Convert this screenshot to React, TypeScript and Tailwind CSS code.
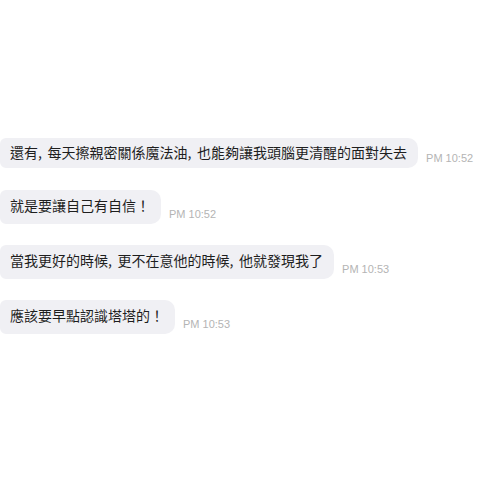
import React from "react";

const msgs = [
  { text: "還有, 每天擦親密關係魔法油, 也能夠讓我頭腦更清醒的面對失去", time: "PM 10:52", first: true },
  { text: "就是要讓自己有自信！", time: "PM 10:52" },
  { text: "當我更好的時候, 更不在意他的時候, 他就發現我了", time: "PM 10:53" },
  { text: "應該要早點認識塔塔的！", time: "PM 10:53" },
];

function Txt({ t }: { t: string }) {
  const parts = t.split(", ");
  return (
    <>
      {parts.map((p, i) => (
        <React.Fragment key={i}>
          {p}
          {i < parts.length - 1 && <span className="mr-[2.5px]">, </span>}
        </React.Fragment>
      ))}
    </>
  );
}

export default function App() {
  return (
    <div className="w-[485px] h-[485px] bg-white overflow-hidden">
      <div className="flex flex-col pt-[138px] gap-[21px]">
        {msgs.map((m, i) => (
          <div key={i} className={"flex items-end " + (i === 1 ? "mt-[1px]" : "")}>
            <div
              className={
                "bg-[#f0f0f4] rounded-r-[10px] rounded-l-[6px] pl-[10px] pr-[11px] text-[14px] leading-[18px] text-[#1e1e1e] whitespace-nowrap " +
                (m.first ? "pt-[5px] pb-[7px]" : "pt-[6px] pb-[10px]")
              }
              style={{ fontFamily: '"Noto Sans CJK TC", "Noto Sans", sans-serif' }}
            >
              <Txt t={m.text} />
            </div>
            <div
              className="ml-[8px] mb-[3px] text-[11px] leading-[13px] text-[#b4b4b4] whitespace-nowrap"
              style={{ fontFamily: '"Liberation Sans", Arial, sans-serif' }}
            >
              {m.time}
            </div>
          </div>
        ))}
      </div>
    </div>
  );
}
